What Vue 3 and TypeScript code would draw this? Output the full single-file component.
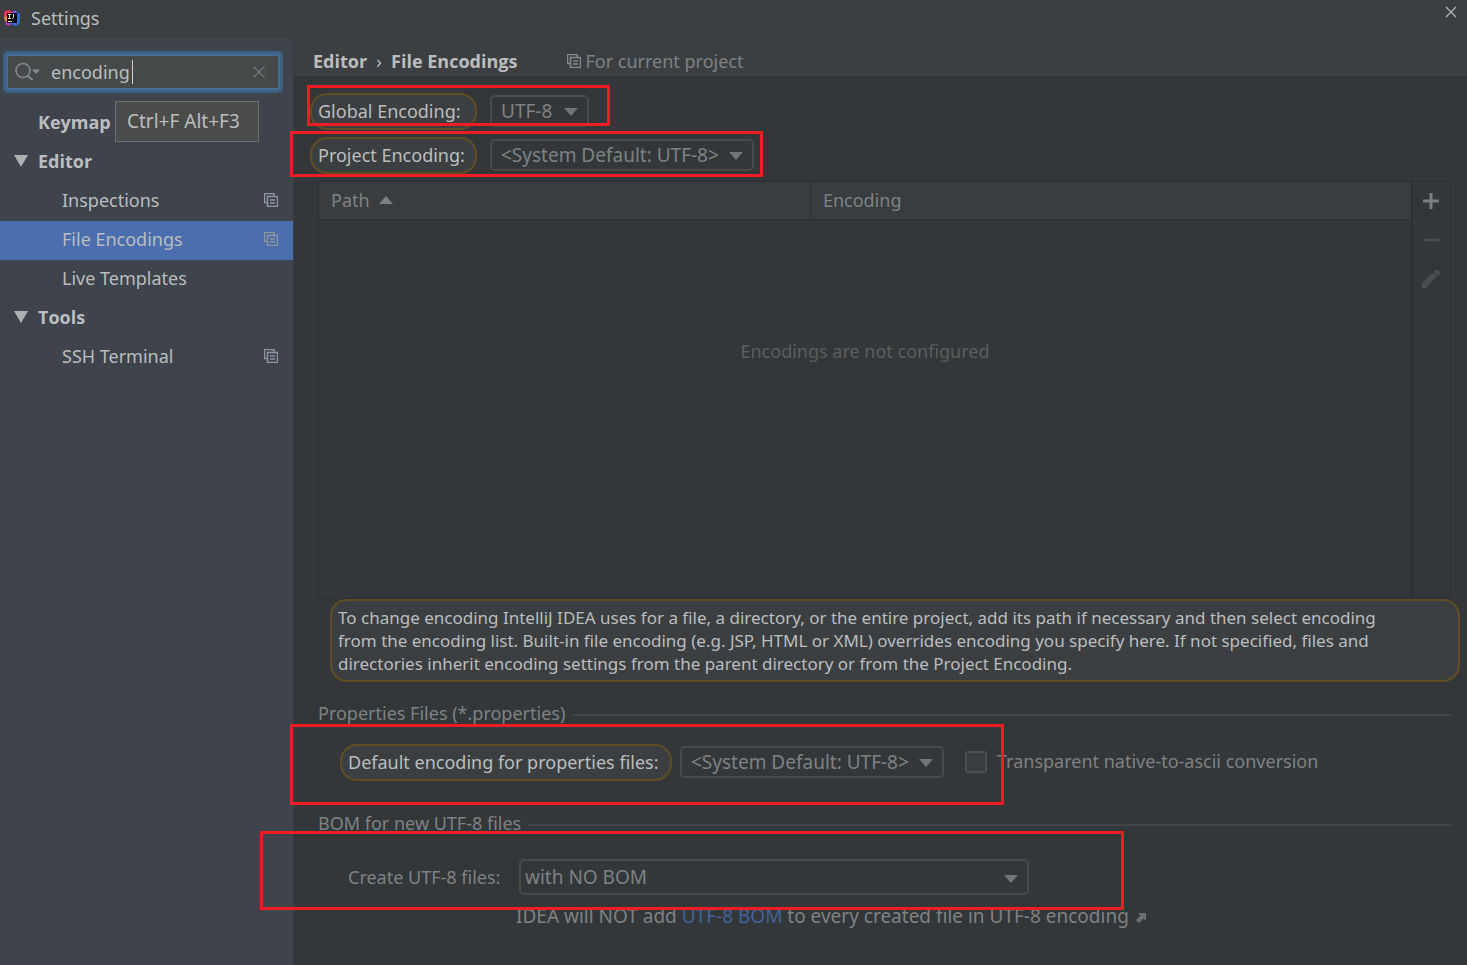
<script setup lang="ts">
import { ref } from 'vue'

interface TreeRow {
  label: string
  level: 'top' | 'group' | 'leaf'
  project?: boolean
  selected?: boolean
}

const rows: TreeRow[] = [
  { label: 'Keymap', level: 'top' },
  { label: 'Editor', level: 'group' },
  { label: 'Inspections', level: 'leaf', project: true },
  { label: 'File Encodings', level: 'leaf', project: true, selected: true },
  { label: 'Live Templates', level: 'leaf' },
  { label: 'Tools', level: 'group' },
  { label: 'SSH Terminal', level: 'leaf', project: true },
]

const hintLines: string[] = [
  'To change encoding IntelliJ IDEA uses for a file, a directory, or the entire project, add its path if necessary and then select encoding',
  'from the encoding list. Built-in file encoding (e.g. JSP, HTML or XML) overrides encoding you specify here. If not specified, files and',
  'directories inherit encoding settings from the parent directory or from the Project Encoding.',
]

const query = ref('encoding')
const transparent = ref(false)
</script>

<template>
  <div class="dialog">
    <header class="titlebar">
      <svg class="logo" width="18" height="18" viewBox="0 0 18 18" aria-hidden="true">
        <path d="M1 2.500L6 1l4 3-5 7-4-2z" fill="#f5315f" />
        <path d="M1 8l3-1 1 6-3-1z" fill="#f58a2c" />
        <path d="M2 12l6 1-1 3.500-4-.5z" fill="#b43fb4" />
        <path d="M9 3l3-1.500L17 5v9l-4 3-6-2z" fill="#3268e8" />
        <path d="M9 3l3-1.500L14 4 9 6z" fill="#7a55e0" />
        <rect x="4" y="4" width="10" height="10" fill="#0b0508" />
        <path d="M5 5.500h3M6.500 5.500v4M5 9.500h3M10.500 5v3.500q0 1-1.500 1" fill="none" stroke="#d8d8d8" stroke-width="1" />
        <path d="M5 12.500h4" stroke="#e8e8e8" stroke-width="1" />
      </svg>
      <h1>Settings</h1>
      <button class="close" type="button" aria-label="Close">
        <svg width="12" height="12" viewBox="0 0 12 12"><path d="M1 1l10 10M11 1L1 11" stroke="#b4b6b7" stroke-width="1.2" /></svg>
      </button>
    </header>

    <div class="body">
      <aside class="sidebar">
        <div class="search">
          <svg width="26" height="20" viewBox="0 0 26 20" aria-hidden="true">
            <circle cx="8" cy="8.500" r="7" fill="none" stroke="#7f8b91" stroke-width="1.6" />
            <path d="M12.500 13.500l5 4.500" stroke="#7f8b91" stroke-width="2.200" />
            <path d="M17 7.500h8l-4 4.500z" fill="#7f8b91" />
          </svg>
          <div class="field">
            <input v-model="query" type="text" aria-label="Search settings" />
            <i class="caret"></i>
          </div>
          <button type="button" aria-label="Clear search">
            <svg width="14" height="14" viewBox="0 0 14 14"><path d="M1.500 1.500l11 11M12.500 1.500l-11 11" stroke="#6f7577" stroke-width="1.500" /></svg>
          </button>
        </div>
        <nav class="tree">
          <a v-for="row in rows" :key="row.label" href="#" :class="[row.level, { selected: row.selected }]">
            <svg v-if="row.level === 'group'" class="fold" width="14" height="12" viewBox="0 0 14 12"><path d="M0 0h14L7 12z" fill="#adb0b1" /></svg>
            <span>{{ row.label }}</span>
            <svg v-if="row.project" class="project" width="14" height="14" viewBox="0 0 14 14">
              <path d="M3 9.500H.500V.500h9.500V3M3.500 3.500h10v10h-10zM6 7h5M6 10h5" fill="none" stroke="#8b959e" stroke-width="1.500" />
            </svg>
          </a>
        </nav>
        <div class="tooltip" role="tooltip">Ctrl+F Alt+F3</div>
      </aside>

      <main>
        <div class="crumbs">
          <b>Editor</b><i>›</i><b>File Encodings</b>
          <span class="scope">
            <svg width="14" height="14" viewBox="0 0 14 14">
              <path d="M3 9.500H.500V.500h9.500V3M3.500 3.500h10v10h-10zM6 7h5M6 10h5" fill="none" stroke="#80898e" stroke-width="1.500" />
            </svg>
            For current project
          </span>
        </div>

        <div class="page">
          <div class="line">
            <span class="cell"><label class="pill" for="global">Global Encoding:</label></span>
            <span class="combo short">
              <select id="global"><option>UTF-8</option></select>
              <svg width="14" height="8" viewBox="0 0 14 8"><path d="M0 0h14L7 8z" /></svg>
            </span>
          </div>
          <div class="line">
            <span class="cell"><label class="pill" for="project">Project Encoding:</label></span>
            <span class="combo">
              <select id="project"><option>&lt;System Default: UTF-8&gt;</option></select>
              <svg width="14" height="8" viewBox="0 0 14 8"><path d="M0 0h14L7 8z" /></svg>
            </span>
          </div>

          <div class="grid">
            <table>
              <thead>
                <tr>
                  <th class="path">
                    Path
                    <svg width="14" height="8" viewBox="0 0 14 8"><path d="M0 8h14L7 0z" fill="#7c7f81" /></svg>
                  </th>
                  <th>Encoding</th>
                </tr>
              </thead>
              <tbody>
                <tr><td colspan="2">Encodings are not configured</td></tr>
              </tbody>
            </table>
            <div class="tools">
              <button type="button" aria-label="Add">
                <svg width="20" height="20" viewBox="0 0 20 20"><path d="M2 10h16M10 2v16" stroke="#7b7e80" stroke-width="3" /></svg>
              </button>
              <button type="button" aria-label="Remove" disabled>
                <svg width="20" height="20" viewBox="0 0 20 20"><path d="M2 10h16" stroke="#4a4d4f" stroke-width="3" /></svg>
              </button>
              <button type="button" aria-label="Edit" disabled>
                <svg width="20" height="20" viewBox="0 0 20 20"><path d="M1 14.500L12 3.500l4 4L5 19H1zM13 2.500L14.500 1q1.200-1 2.400 0l2 2q1 1.200 0 2.400L17 7q-3-1-4-4.500z" fill="#4a4d4f" /></svg>
              </button>
            </div>
          </div>

          <p class="hint"><span v-for="line in hintLines" :key="line">{{ line }}</span></p>

          <fieldset class="first">
            <legend>Properties Files (*.properties)</legend>
            <div class="line">
              <label class="pill" for="properties">Default encoding for properties files:</label>
              <span class="combo">
                <select id="properties"><option>&lt;System Default: UTF-8&gt;</option></select>
                <svg width="14" height="8" viewBox="0 0 14 8"><path d="M0 0h14L7 8z" /></svg>
              </span>
              <input id="ascii" v-model="transparent" type="checkbox" />
              <label class="ticklabel" for="ascii">Transparent native-to-ascii conversion</label>
            </div>
          </fieldset>

          <fieldset class="second">
            <legend>BOM for new UTF-8 files</legend>
            <div class="line">
              <label class="bomlabel" for="bom">Create UTF-8 files:</label>
              <span class="combo wide">
                <select id="bom"><option>with NO BOM</option></select>
                <svg width="14" height="8" viewBox="0 0 14 8"><path d="M0 0h14L7 8z" /></svg>
              </span>
            </div>
            <p class="note">
              IDEA will NOT add <a href="#">UTF-8 BOM</a> to every created file in UTF-8 encoding
              <svg width="10" height="10" viewBox="0 0 10 10"><path d="M2 0h8v8L7.500 5.500 3 10 0 7 4.500 2.500z" fill="#6c7072" /></svg>
            </p>
          </fieldset>
        </div>
      </main>
    </div>

    <i class="mark global"></i>
    <i class="mark project-enc"></i>
    <i class="mark props"></i>
    <i class="mark bom"></i>
  </div>
</template>

<style>
body {
  margin: 0;
  background: #333739;
}
</style>

<style scoped>
* {
  box-sizing: border-box;
}
.dialog {
  position: relative;
  display: flex;
  flex-direction: column;
  min-height: 100vh;
  overflow: hidden;
  background: #333739;
  color: #7f8284;
  font: 18px/24px "Noto Sans", "Open Sans", sans-serif;
  white-space: nowrap;
}
button,
input,
select {
  font: inherit;
  color: inherit;
}
button {
  display: flex;
  align-items: center;
  justify-content: center;
  padding: 0;
  border: 0;
  background: none;
}
svg {
  flex: none;
}
a {
  color: inherit;
  text-decoration: none;
}
.titlebar {
  display: flex;
  align-items: center;
  height: 38px;
  padding: 0 10px 2px 3px;
  background: #3c3f41;
  color: #bbbdbe;
}
h1 {
  flex: 1;
  margin: 0 0 0 10px;
  font-size: 18px;
  font-weight: 400;
}
.close {
  align-self: flex-start;
  height: 24px;
}
.body {
  display: flex;
  flex: 1;
}
.sidebar {
  position: relative;
  flex: none;
  width: 294px;
  padding: 13px 0;
  border-right: 1px solid #393c42;
  background: #3f434c;
  color: #bbbdbe;
}
.search {
  display: flex;
  align-items: center;
  width: 280px;
  height: 42px;
  margin: 0 0 11px 3px;
  padding: 0 14px 0 9px;
  border: 3px solid #3d6185;
  border-radius: 5px;
  background: #45494a;
  box-shadow: inset 0 0 0 2px #466d94;
}
.field {
  position: relative;
  flex: 1;
  height: 24px;
  margin-left: 10px;
}
.field input {
  width: 100%;
  height: 24px;
  padding: 0;
  border: 0;
  outline: 0;
  background: none;
}
.caret {
  position: absolute;
  top: 0;
  left: 81px;
  width: 1px;
  height: 24px;
  background: #d0d0d0;
}
.tree a {
  display: flex;
  align-items: center;
  height: 39px;
  padding: 0 15px 4px 38px;
}
.tree .top,
.tree .group,
.crumbs b {
  font-family: "Open Sans", "Noto Sans", sans-serif;
  font-weight: 700;
}
.tree .group {
  padding-left: 14px;
}
.tree .leaf {
  padding-left: 62px;
}
.tree .selected {
  background: #4b6eaf;
}
.fold {
  margin-right: 10px;
}
.project {
  margin-left: auto;
}
.tooltip {
  position: absolute;
  top: 63px;
  left: 115px;
  width: 144px;
  height: 41px;
  padding: 7px 0 0 11px;
  border: 1px solid #6b6d6e;
  background: #4a4c4a;
  font-size: 19px;
}
main {
  flex: 1;
  min-width: 0;
}
.crumbs {
  display: flex;
  align-items: center;
  height: 38px;
  padding: 8px 0 0 19px;
  background: #3c3f41;
}
.crumbs b,
.crumbs i {
  color: #bbbdbe;
  font-style: normal;
}
.crumbs i {
  width: 24px;
  text-align: center;
}
.scope {
  display: flex;
  align-items: center;
  gap: 4px;
  margin-left: 50px;
}
.page {
  padding: 17px 16px 0 24px;
}
.line {
  display: flex;
  align-items: center;
  height: 37px;
}
.page > .line + .line {
  margin-top: 7px;
}
.cell {
  display: flex;
  width: 167px;
  margin: 0 13px 0 -8px;
}
.cell .pill {
  flex: 1;
}
.pill {
  height: 37px;
  padding: 4px 6px;
  border: 2px solid #614d24;
  border-radius: 17px;
  background: #3c3f41;
  color: #bbbdbe;
}
.combo {
  position: relative;
  width: 264px;
  height: 32px;
  margin-bottom: 1px;
  font-size: 19px;
}
.combo select {
  width: 100%;
  height: 100%;
  padding: 0 0 0 9px;
  border: 2px solid #484b4d;
  border-radius: 5px;
  outline: 0;
  appearance: none;
  background: none;
}
.combo svg {
  position: absolute;
  top: 13px;
  right: 11px;
  fill: #727577;
  pointer-events: none;
}
.combo.short {
  width: 99px;
}
.combo.wide {
  width: 510px;
  height: 36px;
  margin-bottom: 0;
}
.combo.wide select {
  padding-left: 4px;
}
.combo.wide svg {
  top: 16px;
}
.grid {
  display: flex;
  height: 418px;
  margin-top: 7px;
  border: 1px solid #2d3032;
}
table {
  flex: 1;
  height: 100%;
  border-collapse: collapse;
  table-layout: fixed;
}
th {
  height: 37px;
  padding: 0 12px;
  border-bottom: 1px solid #2d3032;
  background: #393d3f;
  font-weight: 400;
  text-align: left;
}
th.path {
  width: 45%;
  border-right: 1px solid #2d3032;
}
th svg {
  margin: 0 0 3px 5px;
}
td {
  padding: 119px 0 0;
  color: #5b5e60;
  text-align: center;
  vertical-align: top;
}
.tools {
  width: 39px;
  border-left: 2px solid #2d3032;
}
.tools button {
  width: 100%;
  height: 39px;
  padding: 0 2px 2px 0;
}
.hint {
  height: 83px;
  margin: 0 -9px 0 12px;
  padding: 5px 6px;
  border: 2px solid #614d24;
  border-radius: 17px;
  background: #3c3f41;
  color: #bbbdbe;
  font-size: 17px;
  line-height: 23px;
}
.hint span {
  display: block;
}
fieldset {
  min-width: 0;
  margin: 0;
  padding: 0;
  border: 0;
}
legend {
  display: flex;
  align-items: center;
  gap: 7px;
  width: 100%;
  padding: 0;
}
legend::after {
  content: "";
  flex: 1;
  height: 2px;
  margin-top: 4px;
  background: #424547;
}
.first {
  margin-top: 19px;
}
.first .line {
  margin: 19px 0 0 22px;
}
.first .pill {
  width: 332px;
}
.first .combo {
  margin-left: 8px;
}
input[type="checkbox"] {
  width: 22px;
  height: 22px;
  margin: 0 10px 1px 21px;
  border: 2px solid #4b4e50;
  border-radius: 3px;
  appearance: none;
  background: #383c3e;
}
.ticklabel {
  margin-bottom: 3px;
}
.second {
  margin-top: 30px;
}
.second .line {
  margin: 23px 0 0 30px;
}
.bomlabel {
  width: 171px;
}
.note {
  margin: 9px 0 0 198px;
  font-size: 19px;
}
.note a {
  color: #42639f;
}
.note svg {
  margin-left: 2px;
}
.mark {
  position: absolute;
  border: 3px solid #ee1c24;
  pointer-events: none;
}
.mark.global {
  top: 85px;
  left: 307px;
  width: 303px;
  height: 41px;
}
.mark.project-enc {
  top: 131px;
  left: 290px;
  width: 473px;
  height: 46px;
}
.mark.props {
  top: 724px;
  left: 290px;
  width: 714px;
  height: 81px;
}
.mark.bom {
  top: 831px;
  left: 260px;
  width: 864px;
  height: 79px;
}
</style>
